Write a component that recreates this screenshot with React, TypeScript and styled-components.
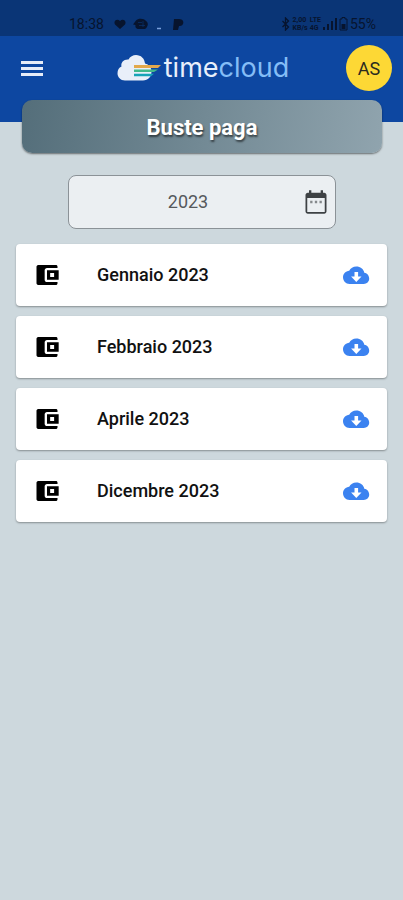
import React from "react";
import styled, { createGlobalStyle } from "styled-components";

const GlobalStyle = createGlobalStyle`
  * { box-sizing: border-box; }
  body {
    margin: 0;
    background: #cdd8dd;
    font-family: Roboto, "Liberation Sans", sans-serif;
    color: #111;
  }
  button { font: inherit; border: 0; padding: 0; background: none; cursor: pointer; }
`;

const Page = styled.div`
  min-height: 100vh;
  background: #cdd8dd;
`;

const StatusBar = styled.div`
  display: flex;
  justify-content: space-between;
  align-items: center;
  height: 36px;
  padding: 12px 27px 0 69px;
  background: #0a3576;
  color: #07142e;
  font-size: 14px;
  line-height: 24px;
`;

const StatusGroup = styled.div<{ $gap: number }>`
  display: flex;
  align-items: center;
  gap: ${(p) => p.$gap}px;
`;

const TinyStack = styled.span`
  display: flex;
  flex-direction: column;
  font-size: 7px;
  line-height: 8px;
  font-weight: 700;
`;

const Header = styled.header`
  display: grid;
  grid-template-columns: 1fr auto 1fr;
  align-items: start;
  height: 86px;
  padding: 9px 11px 0 14px;
  background: #0d47a1;
`;

const MenuButton = styled.button`
  display: flex;
  align-items: center;
  height: 46px;
  width: 24px;
  margin-left: 6px;
`;

const Brand = styled.a`
  display: flex;
  align-items: center;
  gap: 3px;
  height: 46px;
  color: #e8effb;
  font-family: Inter, "Liberation Sans", sans-serif;
  font-size: 27px;
  line-height: 32px;
  text-decoration: none;
`;

const BrandAccent = styled.span`
  color: #84bdf6;
`;

const Avatar = styled.button`
  justify-self: end;
  width: 46px;
  height: 46px;
  border-radius: 50%;
  background: #fdd835;
  color: #2b2a20;
  font-size: 18px;
`;

const Banner = styled.h1`
  margin: -22px 21px 0 22px;
  padding: 16px 0 13px;
  border-radius: 10px;
  background: linear-gradient(100deg, #546e7a, #90a4ae);
  box-shadow: 0 1px 2px rgba(0, 0, 0, 0.5);
  color: #fff;
  font-size: 22px;
  line-height: 24px;
  font-weight: 700;
  text-align: center;
  text-shadow: 1px 2px 2px rgba(0, 0, 0, 0.55);
`;

const YearField = styled.label`
  display: flex;
  align-items: center;
  height: 54px;
  margin: 22px 67px 0 68px;
  padding: 0 5px;
  border: 1px solid #8b9297;
  border-radius: 8px;
  background: #ebeff2;
`;

const YearInput = styled.input`
  flex: 1;
  min-width: 0;
  padding: 0;
  border: 0;
  outline: 0;
  background: none;
  color: #55595c;
  font: 400 18px/24px Roboto, "Liberation Sans", sans-serif;
  text-align: center;
`;

const CalendarButton = styled.button`
  display: flex;
`;

const List = styled.ul`
  display: flex;
  flex-direction: column;
  gap: 10px;
  margin: 15px 16px 0;
  padding: 0;
  list-style: none;
`;

const Card = styled.li`
  display: flex;
  align-items: center;
  height: 62px;
  padding: 0 17px;
  border-radius: 4px;
  background: #fff;
  box-shadow: 0 1px 2px rgba(0, 0, 0, 0.35);
`;

const Month = styled.span`
  flex: 1;
  margin-left: 36px;
  font-size: 18px;
  line-height: 24px;
  font-weight: 500;
`;

const DownloadButton = styled.button`
  display: flex;
`;

const months = ["Gennaio 2023", "Febbraio 2023", "Aprile 2023", "Dicembre 2023"];

const NotificationIcons = () => (
  <svg width="70" height="14" viewBox="0 0 70 14" fill="currentColor" aria-hidden="true">
    <path d="M6 12 1 7.500C-1 4 3 1 6 4c3-3 7 0 5 3.500z" />
    <path d="M22 3.500C24 1 30 1 32 4c3 2 2 6-1 8h-6c-3 0-4-2-3.500-4L19 7.500z" />
    <path d="M24 5.500h4M25 8.500h6M29 4v6" stroke="#0a3576" strokeWidth="0.6" />
    <path d="M43 11.500h4" stroke="#7aa0dc" strokeWidth="1.500" />
    <path d="M60 2h5c4 0 5 3 4 5s-3 2-4 2l-1 4h-5z" />
  </svg>
);

const BluetoothIcon = () => (
  <svg width="10" height="14" viewBox="0 0 10 14" fill="none" stroke="currentColor" aria-hidden="true">
    <path d="m1.500 4 6 6L4.500 13V1l3 3-6 6" strokeWidth="1.300" />
  </svg>
);

const SignalIcon = () => (
  <svg width="14" height="14" viewBox="0 0 14 14" fill="currentColor" aria-hidden="true">
    <path d="M0 10h2v3H0zM4 7h2v6H4zM8 4h2v9H8zM12 1h2v12h-2z" />
  </svg>
);

const BatteryIcon = () => (
  <svg width="9" height="14" viewBox="0 0 9 14" aria-hidden="true">
    <path d="M3 .5h3V2h2v11H1V2h2z" fill="none" stroke="currentColor" />
    <path d="M2.500 7h4v5h-4z" fill="currentColor" />
  </svg>
);

const MenuIcon = () => (
  <svg width="24" height="16" viewBox="0 0 24 16" fill="#e6ecf8" aria-hidden="true">
    <path d="M1 1h22v3H1zM1 7h22v3H1zM1 13h22v3H1z" />
  </svg>
);

const CloudLogo = () => (
  <svg width="44" height="28" viewBox="0 0 44 28" aria-hidden="true">
    <path
      d="M8 26.500c-4.500 0-7.500-3.200-7.500-7.200 0-3.300 1.500-5.800 4-6.800C3.500 8.500 7 5 11.500 5.500 13 2.500 16 1 19 1c5 0 8.500 3.500 9 8.500 4 1 6.500 4 6.500 8 0 5.500-3.500 9-8.500 9z"
      fill="#e9eff9"
    />
    <path d="M17 11h27l-3 3H17z" fill="#e2a84c" />
    <path d="M17 15.500h24l-4 2.500H17z" fill="#42b98a" />
    <path d="M17 19.700h20l-3 2.500H17z" fill="#17a3b7" />
  </svg>
);

const CalendarIcon = () => (
  <svg width="28" height="28" viewBox="0 0 24 24" fill="#3d4144" aria-hidden="true">
    <path d="M19 4h-1V2h-2v2H8V2H6v2H5c-1.100 0-2 .9-2 2v14c0 1.100.9 2 2 2h14c1.100 0 2-.9 2-2V6c0-1.100-.9-2-2-2zm.500 16.500h-15V8.500h15z" />
    <path d="M7 11h2v2H7zM11 11h2v2h-2zM15 11h2v2h-2z" fill="#85898c" />
  </svg>
);

const WalletIcon = () => (
  <svg width="28" height="28" viewBox="0 0 24 24" fill="#000" aria-hidden="true">
    <path d="M21 18v1c0 1-.500 1.500-1.500 1.500H5c-1.100 0-2-.500-2-1.500V5c0-1 .9-1.500 2-1.500h14.500c1 0 1.500.500 1.500 1.500v1h-9c-1.100 0-2 .9-2 2v8c0 1.100.9 2 2 2z" />
    <path fillRule="evenodd" d="M12 8h10v8H12zM14.700 10.300v3.400h3.400v-3.400z" />
  </svg>
);

const DownloadIcon = () => (
  <svg width="28" height="28" viewBox="0 0 28 28" fill="#3b82f0" aria-hidden="true">
    <path d="M22.300 11.700C21.600 8 18.300 5.500 14.300 5.500c-3.200 0-5.800 1.700-7.100 4.300C3.800 10.200 1 12.700 1 16.300 1 20 3.800 23 7.500 23h14.300c3 0 5.400-2.200 5.400-5.400 0-3.200-2.200-5.600-4.900-5.900zM19.500 15.500 14.300 21l-5.200-5.500h3.400V11h3.600v4.500z" />
  </svg>
);

export default function App() {
  const [year, setYear] = React.useState("2023");
  return (
    <Page>
      <GlobalStyle />
      <StatusBar>
        <StatusGroup $gap={10}>
          <span>18:38</span>
          <NotificationIcons />
        </StatusGroup>
        <StatusGroup $gap={2}>
          <BluetoothIcon />
          <TinyStack>
            <span>2,00</span>
            <span>KB/s</span>
          </TinyStack>
          <TinyStack>
            <span>LTE</span>
            <span>4G</span>
          </TinyStack>
          <SignalIcon />
          <BatteryIcon />
          <span>55%</span>
        </StatusGroup>
      </StatusBar>
      <Header>
        <MenuButton aria-label="Menu">
          <MenuIcon />
        </MenuButton>
        <Brand href="#">
          <CloudLogo />
          <span>
            time<BrandAccent>cloud</BrandAccent>
          </span>
        </Brand>
        <Avatar>AS</Avatar>
      </Header>
      <main>
        <Banner>Buste paga</Banner>
        <YearField>
          <YearInput aria-label="Anno" value={year} onChange={(e) => setYear(e.target.value)} />
          <CalendarButton aria-label="Scegli anno">
            <CalendarIcon />
          </CalendarButton>
        </YearField>
        <List>
          {months.map((month) => (
            <Card key={month}>
              <WalletIcon />
              <Month>{month}</Month>
              <DownloadButton aria-label={`Scarica ${month}`}>
                <DownloadIcon />
              </DownloadButton>
            </Card>
          ))}
        </List>
      </main>
    </Page>
  );
}
